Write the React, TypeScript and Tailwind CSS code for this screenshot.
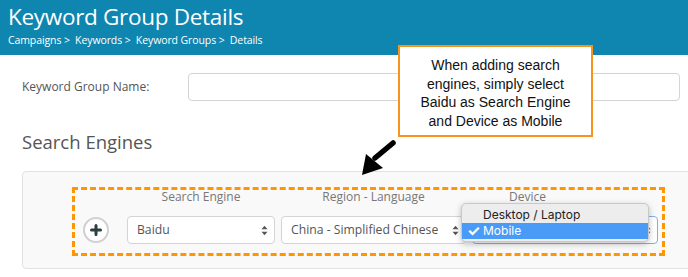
import React from 'react';

// small up/down chevrons used by the native-looking selects
const SelectArrows = () => (
    <svg width="7" height="11" viewBox="0 0 7 11" className="shrink-0">
        <path d="M0.5 4.2 L3.5 0.8 L6.5 4.2 Z" fill="#555" />
        <path d="M0.5 6.8 L3.5 10.2 L6.5 6.8 Z" fill="#555" />
    </svg>
);

const FakeSelect = ({ value, width, focused }: { value: string; width: string; focused?: boolean }) => (
    <div
        className={`${width} h-[28px] flex items-center justify-between pl-[9px] pr-[6px] bg-white rounded-[4px] border text-[12.2px] text-[#555] ${
            focused ? 'border-[#7fb0e6]' : 'border-[#d4d4d4]'
        }`}
    >
        <span className="truncate">{value}</span>
        <SelectArrows />
    </div>
);

const App = () => {
    return (
        <div className="relative w-[688px] h-[277px] overflow-hidden bg-white font-['Open_Sans',sans-serif]">
            {/* Header */}
            <div className="h-[55px] bg-[#0e86b0] px-2 pt-[2px]">
                <h1 className="text-[22.5px] leading-[30px] text-white tracking-[-0.3px]">Keyword Group Details</h1>
                <p className="text-[10.5px] leading-[14px] font-medium text-white mt-[1px] tracking-[-0.1px]">
                    Campaigns &gt;&nbsp; Keywords &gt;&nbsp; Keyword Groups &gt;&nbsp; Details
                </p>
            </div>

            {/* Form */}
            <div className="pl-[22px]">
                <div className="flex items-center mt-[18px]">
                    <label className="w-[166px] text-[12px] text-[#555]">Keyword Group Name:</label>
                    <div className="w-[492px] h-[28px] bg-white border border-[#d4d4d4] rounded-[4px]" />
                </div>

                <h2 className="mt-[27px] text-[18.5px] leading-[28px] text-[#555]">Search Engines</h2>

                <div className="mt-[15px] w-[700px] h-[98px] bg-[#f9f9f9] border border-[#e2e2e2] rounded-[4px] pl-[49px] pt-[15px]">
                    <div className="w-[593px] h-[69px] border-[3px] border-dashed border-[#ff9500] pl-[8px] flex items-end pb-[9px]">
                        <div className="w-[26px] h-[26px] mb-[1px] rounded-full bg-white border-2 border-[#d0d0d0] flex items-center justify-center">
                            <svg width="12" height="12" viewBox="0 0 12 12">
                                <path d="M6 1.5 V10.5 M1.5 6 H10.5" stroke="#2c3d44" strokeWidth="3" strokeLinecap="round" />
                            </svg>
                        </div>
                        <div className="ml-[18px] flex gap-[6px]">
                            <div className="flex flex-col gap-[11px]">
                                <span className="text-[12px] leading-[16px] text-[#777] text-center">Search Engine</span>
                                <FakeSelect value="Baidu" width="w-[148px]" />
                            </div>
                            <div className="flex flex-col gap-[11px]">
                                <span className="text-[12px] leading-[16px] text-[#777] text-center">Region - Language</span>
                                <FakeSelect value="China - Simplified Chinese" width="w-[185px]" />
                            </div>
                            <div className="flex flex-col gap-[11px]">
                                <span className="text-[12px] leading-[16px] text-[#777] pl-[37px]">Device</span>
                                <FakeSelect value="" width="w-[186px]" focused />
                            </div>
                        </div>
                    </div>
                </div>
            </div>

            {/* Open dropdown menu */}
            <div className="absolute left-[461px] top-[203px] w-[188px] h-[39px] rounded-[5px] bg-[#ededed] border border-[#c8c8c8] shadow-[0_2px_6px_rgba(0,0,0,0.25)] py-[3px] font-['Inter',sans-serif] text-[12px]">
                <div className="h-[16px] leading-[16px] pl-[21px] text-[#222]">Desktop / Laptop</div>
                <div className="h-[16px] leading-[16px] bg-[#4a9bf8] text-white flex items-center">
                    <span className="w-[21px] pl-[5px] text-[15px] font-bold leading-[16px]">✓</span>
                    <span>Mobile</span>
                </div>
            </div>

            {/* Callout */}
            <div className="absolute left-[398px] top-[45px] w-[195px] h-[92px] bg-white border-2 border-[#f7941d] pt-[9px] text-center font-['Liberation_Sans',Arial,sans-serif] text-[14px] leading-[18.5px] text-[#111]">
                When adding search<br />
                engines, simply select<br />
                Baidu as Search Engine<br />
                and Device as Mobile
            </div>

            {/* Arrow */}
            <svg className="absolute left-[355px] top-[138px]" width="45" height="42" viewBox="0 0 45 42">
                <path d="M38 5 L20 20" stroke="#000" strokeWidth="5.5" strokeLinecap="round" />
                <path d="M7 37 L11 16 L28 30 Z" fill="#000" />
            </svg>
        </div>
    );
};

export default App;
